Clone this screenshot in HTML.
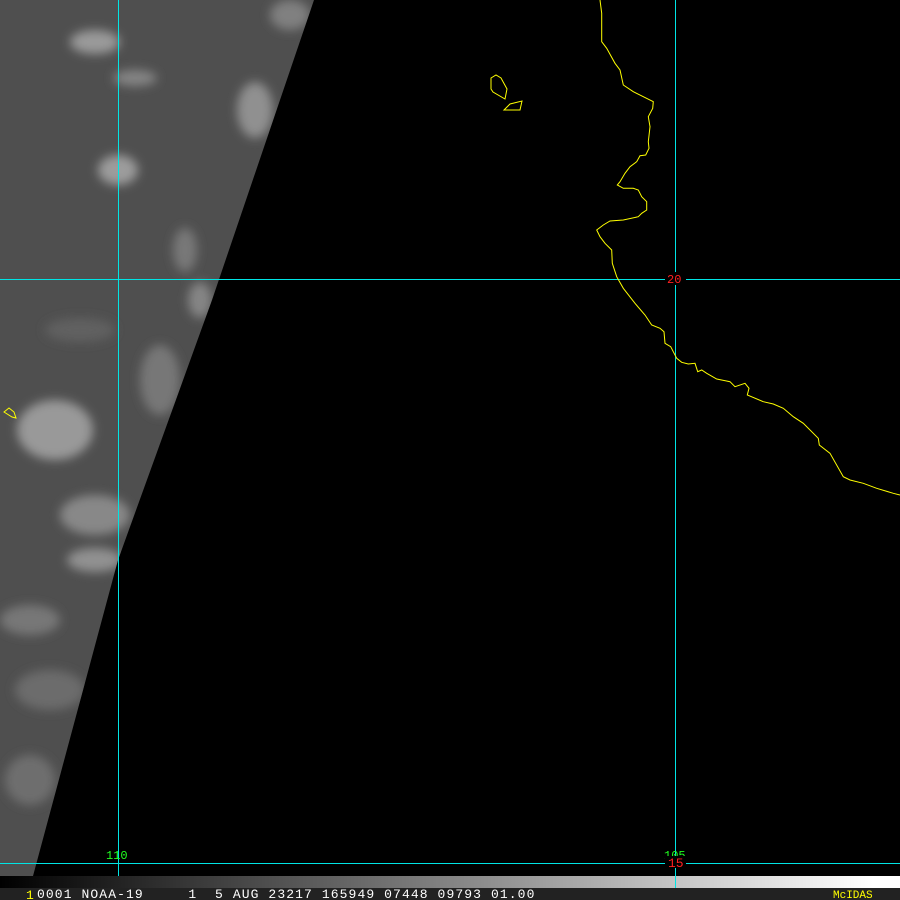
<!DOCTYPE html>
<html><head><meta charset="utf-8"><style>
html,body{margin:0;padding:0;background:#000;width:900px;height:900px;overflow:hidden}
svg{display:block}
.t{font-family:"Liberation Mono",monospace;font-size:13px;letter-spacing:1.1px;white-space:pre}
</style></head><body>
<svg width="900" height="900" viewBox="0 0 900 900" xmlns="http://www.w3.org/2000/svg">
<defs>
<clipPath id="sw"><polygon points="0,0 314,0 212,300 118,560 33,876 0,876"/></clipPath>
<filter id="bl" x="-50%" y="-50%" width="200%" height="200%"><feGaussianBlur stdDeviation="5"/></filter>
<linearGradient id="gb" x1="0" x2="1"><stop offset="0" stop-color="#000"/><stop offset="0.97" stop-color="#fff"/><stop offset="1" stop-color="#fff"/></linearGradient>
</defs>
<rect width="900" height="900" fill="#000"/>
<g clip-path="url(#sw)">
<rect width="320" height="880" fill="#4f4f4f"/>
<g filter="url(#bl)">
<ellipse cx="95" cy="42" rx="25" ry="12" fill="#9a9a9a"/>
<ellipse cx="135" cy="78" rx="22" ry="8" fill="#858585"/>
<ellipse cx="118" cy="170" rx="20" ry="15" fill="#9c9c9c"/>
<ellipse cx="255" cy="110" rx="18" ry="28" fill="#909090"/>
<ellipse cx="185" cy="250" rx="12" ry="22" fill="#787878"/>
<ellipse cx="55" cy="430" rx="38" ry="30" fill="#999"/>
<ellipse cx="95" cy="515" rx="35" ry="20" fill="#888"/>
<ellipse cx="95" cy="560" rx="28" ry="12" fill="#919191"/>
<ellipse cx="160" cy="380" rx="20" ry="35" fill="#777"/>
<ellipse cx="30" cy="620" rx="30" ry="15" fill="#777"/>
<ellipse cx="50" cy="690" rx="35" ry="20" fill="#6c6c6c"/>
<ellipse cx="30" cy="780" rx="25" ry="25" fill="#6e6e6e"/>
<ellipse cx="80" cy="330" rx="35" ry="12" fill="#606060"/>
<ellipse cx="200" cy="300" rx="12" ry="18" fill="#858585"/>
<ellipse cx="290" cy="15" rx="20" ry="15" fill="#808080"/>
</g>
<path d="M4,412 L9,408 L14,412 L16,418 L12,417 Z" fill="none" stroke="#ffff00"/>
</g>
<g stroke="#00e5e5" stroke-width="1" shape-rendering="crispEdges">
<line x1="118.5" y1="0" x2="118.5" y2="900"/>
<line x1="675.5" y1="0" x2="675.5" y2="900"/>
<line x1="0" y1="279.5" x2="900" y2="279.5"/>
<line x1="0" y1="863.5" x2="900" y2="863.5"/>
</g>
<g fill="none" stroke="#ffff00" stroke-width="1">
<path d="M600,0 L601.7,13.3 L601.7,41.7 L606.7,48.3 L615,63.3 L620,70 L623.3,85 L633.3,91.7 L643.3,96.7 L653.3,101.7 L652.7,108.3 L648.3,116.7 L650,126.7 L648.3,141.7 L649,148.3 L645.7,155 L640,155.7 L636.7,161.7 L630,166.7 L625,173.3 L620,181.7 L617.3,185 L623.3,188.3 L633.3,188.3 L638.3,190 L641.7,196.7 L646.7,201.7 L646.7,210 L641.7,213.3 L638.3,216.7 L623.3,220 L610,221 L603.3,225 L596.7,230 L600,236.7 L605,243.3 L611.7,250 L612.3,263.3 L616.7,276.7 L623.3,288.3 L635,303.3 L645,315 L651.7,325 L660,328.3 L664,331.7 L665,343.3 L670.7,346.7 L676.7,358.3 L681.7,362.3 L688.3,364 L695,363.3 L697.7,371.7 L701.7,370 L706.7,373.3 L716.7,379 L730,381.7 L735,386.7 L745,383.3 L749,388.3 L747.3,395 L763.3,401.7 L773.3,404 L783.3,408.3 L793.3,416.7 L803.3,423.3 L818.3,438.3 L819.3,445 L830,453.3 L843.3,476.7 L850,480 L863.3,483.3 L876.7,488.3 L893.3,493.3 L900,495"/>
<path d="M491,78 L496,75 L501,78 L507,89 L505,99 L493,92 L491,89 Z"/>
<path d="M504,110 L510,104 L522,101 L520,110 Z"/>
</g>
<rect x="665" y="272" width="21" height="13" fill="#000"/>
<text x="667" y="283" class="t" fill="#ff2020" style="font-size:12px;letter-spacing:0">20</text>
<text x="106" y="859" class="t" fill="#20ff20" style="font-size:12px;letter-spacing:0">110</text>
<text x="664" y="859" class="t" fill="#20ff20" style="font-size:12px;letter-spacing:0">105</text>
<rect x="665" y="856" width="21" height="12" fill="#000"/>
<text x="668" y="867" class="t" fill="#ff2020" style="font-size:13px;letter-spacing:0">15</text>
<rect x="0" y="876" width="900" height="12" fill="url(#gb)"/>
<line x1="675.5" y1="876" x2="675.5" y2="888" stroke="#00e5e5"/>
<rect x="0" y="888" width="900" height="12" fill="#222"/>
<text x="26" y="899" class="t" fill="#ffff00">1</text>
<text x="37" y="898" class="t" fill="#fff" xml:space="preserve">0001 NOAA-19     1  5 AUG 23217 165949 07448 09793 01.00</text>
<text x="833" y="898" class="t" fill="#ffff00" style="font-size:11px;letter-spacing:0">McIDAS</text>
</svg>
</body></html>
